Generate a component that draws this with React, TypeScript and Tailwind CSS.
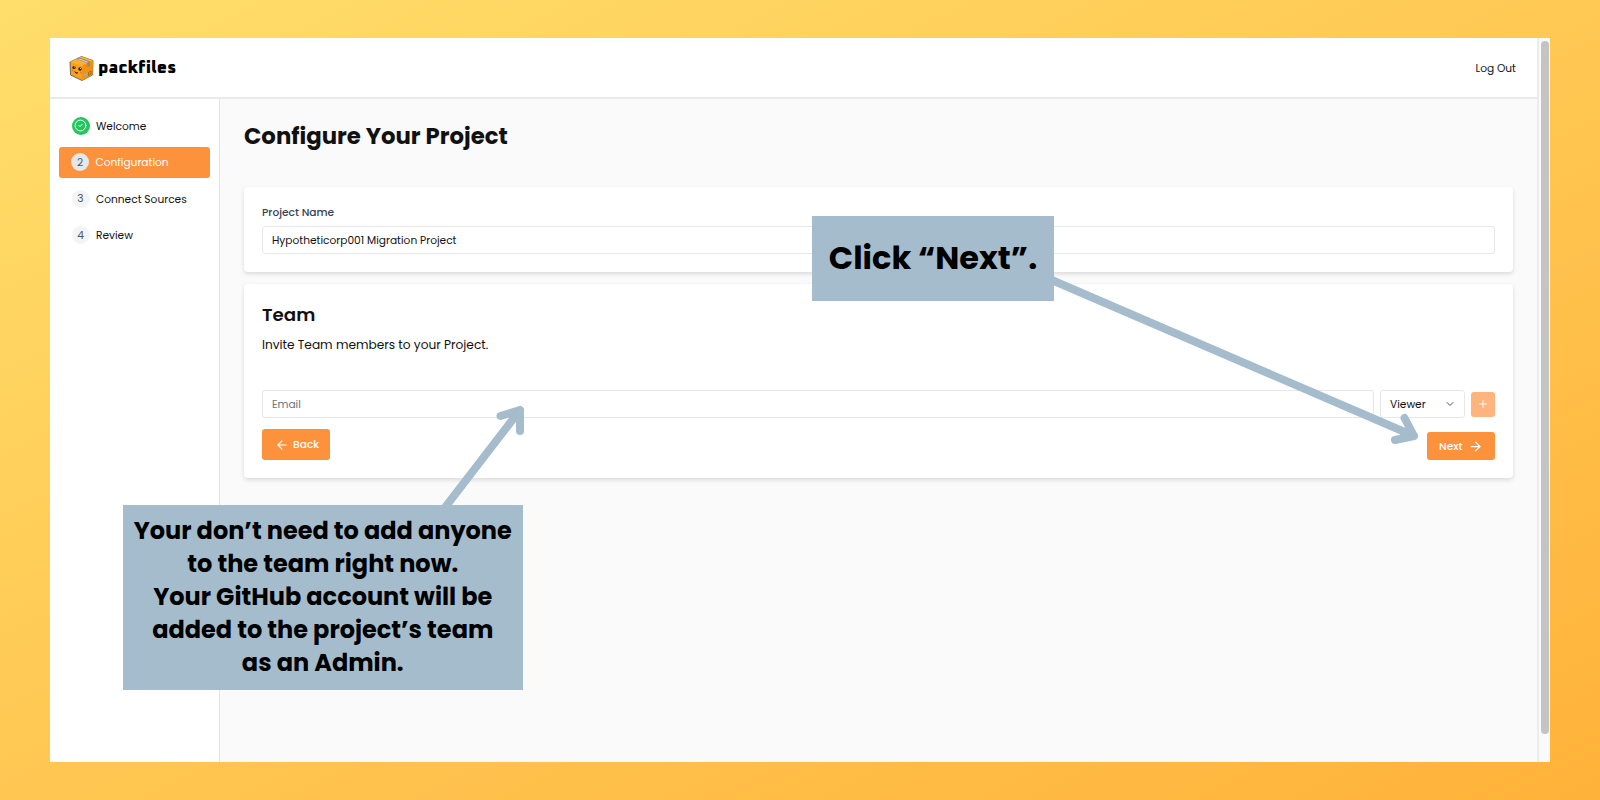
import { ArrowLeft, ArrowRight, ChevronDown, CircleCheck, Plus } from "lucide-react";

function BoxLogo() {
  return (
    <svg viewBox="0 0 50 50" className="h-[25px] w-[25px]" strokeLinejoin="round">
      <path d="M2 12 L25 1 L48 9 L47 38 L26 49 L3 38 Z" fill="#fba21c" stroke="#55504c" strokeWidth="1.6" />
      <path d="M2 12 L25 1 L48 9 L27 19 Z" fill="#fcb036" />
      <path d="M27 19 L48 9 L47 38 L26 49 Z" fill="#f3920f" />
      <path d="M15 6 L21 3 L42 11 L42 20 L37 22 L36 14 Z" fill="#8f8a84" />
      <path d="M18 6 L21 5 L39 12 L36 13 Z" fill="#d8d2c8" />
      <path d="M29 36 l7 -3 v6 l-7 3z" fill="#b9a58c" />
      <path d="M39 33 l5 -3 v6 l-5 3z" fill="none" stroke="#8a6024" strokeWidth="1.5" />
      <circle cx="10" cy="23" r="3.2" fill="#2b1a10" />
      <circle cx="22" cy="26" r="3.4" fill="#2b1a10" />
      <circle cx="11" cy="22" r="1" fill="#fff" />
      <circle cx="23" cy="25" r="1" fill="#fff" />
      <circle cx="7" cy="29" r="2" fill="#f0762f" />
      <circle cx="24" cy="33" r="2" fill="#f0762f" />
      <path d="M11 31 q4 7 7 2" fill="#8c2b12" stroke="#2b1a10" strokeWidth="1.6" />
    </svg>
  );
}

function Header() {
  return (
    <header className="flex h-[61px] shrink-0 items-center justify-between border-b-2 border-[#e9eaee] pr-[21px] pl-[19px]">
      <div className="flex items-center gap-[4px] pt-px">
        <BoxLogo />
        <span className="font-['Oxanium','Roboto',sans-serif] text-[17.6px] leading-6 font-extrabold text-black">packfiles</span>
      </div>
      <a className="pt-[2px] text-[10.64px]">Log Out</a>
    </header>
  );
}

function Sidebar() {
  return (
    <nav className="flex w-[170px] shrink-0 flex-col gap-[6px] border-r border-[#e2e4e8] bg-white px-[9px] pt-[11.5px] text-[10.64px]">
      <div className="flex h-[30.5px] items-center gap-[6.5px] pl-[12.5px]">
        <span className="flex h-[18px] w-[18px] items-center justify-center rounded-full bg-[#22c55e] text-white">
          <CircleCheck size={13} strokeWidth={1.8} />
        </span>
        <span className="pt-[2px]">Welcome</span>
      </div>
      <div className="flex h-[30.5px] items-center gap-[6.5px] rounded-[3px] bg-[#fd923c] pl-[12px] text-white">
        <span className="flex h-[18px] w-[18px] items-center justify-center rounded-full bg-[#e5e7eb] pt-px text-[#4b5563]">2</span>
        <span className="pt-px">Configuration</span>
      </div>
      <div className="flex h-[30.5px] items-center gap-[6.5px] pl-[12.5px]">
        <span className="flex h-[18px] w-[18px] items-center justify-center rounded-full bg-[#f3f4f6] pt-px text-[#4b5563]">3</span>
        <span className="pt-[2px]">Connect Sources</span>
      </div>
      <div className="flex h-[30.5px] items-center gap-[6.5px] pl-[12.5px]">
        <span className="flex h-[18px] w-[18px] items-center justify-center rounded-full bg-[#f3f4f6] pt-px text-[#4b5563]">4</span>
        <span className="pt-px">Review</span>
      </div>
    </nav>
  );
}

function ProjectCard() {
  return (
    <section className="mt-[35px] h-[85px] rounded-[4px] bg-white px-[18px] pt-[17px] shadow-[0_2px_4px_rgba(0,0,0,0.13)]">
      <label className="block h-[22px] text-[10.64px] leading-[18px] font-medium text-[#374151]">Project Name</label>
      <div className="flex h-[28px] items-center rounded-[3px] border border-[#e5e7eb] px-[9px] pt-[2px] text-[10.64px]">
        Hypotheticorp001 Migration Project
      </div>
    </section>
  );
}

function TeamCard() {
  return (
    <section className="mt-[12px] h-[194px] rounded-[4px] bg-white px-[18px] pt-[18px] shadow-[0_2px_4px_rgba(0,0,0,0.13)]">
      <h2 className="text-[18.24px] leading-[26px] font-semibold">Team</h2>
      <p className="mt-[7px] text-[12.16px] leading-[20px]">Invite Team members to your Project.</p>
      <div className="mt-[35px] flex items-center">
        <div className="flex h-[28px] flex-1 items-center rounded-[3px] border border-[#e5e7eb] px-[9px] pt-[2px] text-[10.64px] text-[#6b7280]">Email</div>
        <div className="ml-[6px] flex h-[28px] w-[85px] items-center justify-between rounded-[3px] border border-[#e5e7eb] pr-[8px] pl-[9px] text-[10.64px]">
          <span className="pt-[2px]">Viewer</span>
          <ChevronDown size={12} strokeWidth={2} className="text-[#4b5563]" />
        </div>
        <button className="ml-[6px] flex h-[25px] w-[24px] items-center justify-center rounded-[3px] bg-[#feb47c] text-white">
          <Plus size={12} strokeWidth={1.8} />
        </button>
      </div>
      <div className="mt-[11px] flex items-end justify-between text-[10.64px] font-medium text-white">
        <button className="flex h-[31px] w-[68px] items-center gap-[4px] rounded-[3px] bg-[#fd923c] pl-[13px]">
          <ArrowLeft size={14} strokeWidth={2} />
          Back
        </button>
        <button className="flex h-[28px] w-[68px] items-center gap-[6px] rounded-[3px] bg-[#fd923c] pl-[12px]">
          <span className="pt-[2px]">Next</span>
          <ArrowRight size={15} strokeWidth={2} />
        </button>
      </div>
    </section>
  );
}

function Annotations() {
  return (
    <>
      <svg className="absolute inset-0 h-[800px] w-[1600px]" fill="none" stroke="#a5bccc" strokeWidth="8" strokeLinecap="round" strokeLinejoin="round">
        <path d="M440 514 L520 410 M500.5 416 L520 410 L520 431" />
        <path d="M1040 275 L1414 436 M1404.5 418 L1414 436 L1395 440" />
      </svg>
      <div className="absolute top-[216px] left-[812px] flex h-[85px] w-[242px] items-center justify-center bg-[#a5bccc] pb-[1px] text-[32px] font-bold whitespace-nowrap text-black">
        Click “Next”.
      </div>
      <div className="absolute top-[505px] left-[123px] flex h-[185px] w-[399.5px] flex-col items-center bg-[#a5bccc] pt-[9px] text-[24px] leading-[33px] font-bold whitespace-nowrap text-black">
        <span>Your don’t need to add anyone</span>
        <span>to the team right now.</span>
        <span>Your GitHub account will be</span>
        <span>added to the project’s team</span>
        <span>as an Admin.</span>
      </div>
    </>
  );
}

export default function App() {
  return (
    <div className="relative h-[800px] w-[1600px] overflow-hidden bg-linear-[155deg] from-[#ffde6b] to-[#ffb23a] px-[50px] pt-[38px] font-['Poppins','Inter',sans-serif] text-[#111111]">
      <div className="flex h-[724px] w-[1500px] bg-white">
        <div className="flex w-[1487px] flex-col">
          <Header />
          <div className="flex flex-1">
            <Sidebar />
            <main className="flex-1 bg-[#fafafa] pt-[21px] pr-[24px] pl-[24px]">
              <h1 className="text-[22.8px] leading-[32px] font-bold">Configure Your Project</h1>
              <ProjectCard />
              <TeamCard />
            </main>
          </div>
        </div>
        <div className="w-[13px] border-l-2 border-[#ececec] bg-[#fafafa] pt-[3px] pl-[2px]">
          <div className="h-[693px] w-[8px] rounded-full bg-[#c4c4c4]" />
        </div>
      </div>
      <Annotations />
    </div>
  );
}
